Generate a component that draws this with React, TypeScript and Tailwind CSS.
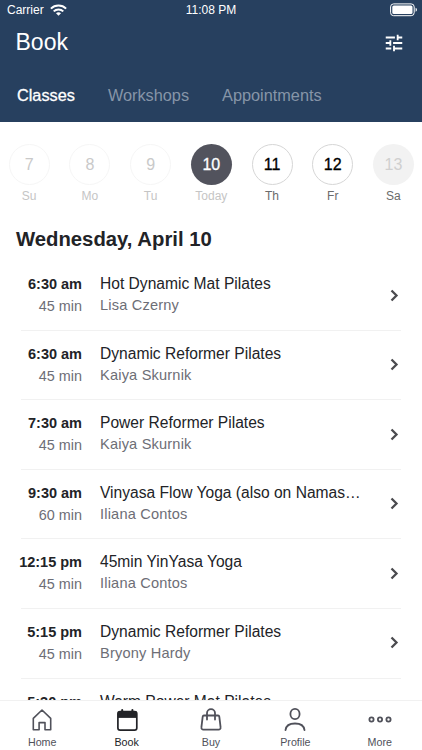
import React, { JSX } from 'react';
import clsx from 'clsx';

const days = [
  { date: 7, label: 'Su', state: 'past' },
  { date: 8, label: 'Mo', state: 'past' },
  { date: 9, label: 'Tu', state: 'past' },
  { date: 10, label: 'Today', state: 'selected' },
  { date: 11, label: 'Th', state: 'open' },
  { date: 12, label: 'Fr', state: 'open' },
  { date: 13, label: 'Sa', state: 'closed' },
];

const classes = [
  { id: 1, time: '6:30 am', duration: '45 min', name: 'Hot Dynamic Mat Pilates', teacher: 'Lisa Czerny' },
  { id: 2, time: '6:30 am', duration: '45 min', name: 'Dynamic Reformer Pilates', teacher: 'Kaiya Skurnik' },
  { id: 3, time: '7:30 am', duration: '45 min', name: 'Power Reformer Pilates', teacher: 'Kaiya Skurnik' },
  { id: 4, time: '9:30 am', duration: '60 min', name: 'Vinyasa Flow Yoga (also on Namas…', teacher: 'Iliana Contos' },
  { id: 5, time: '12:15 pm', duration: '45 min', name: '45min YinYasa Yoga', teacher: 'Iliana Contos' },
  { id: 6, time: '5:15 pm', duration: '45 min', name: 'Dynamic Reformer Pilates', teacher: 'Bryony Hardy' },
  { id: 7, time: '5:30 pm', duration: '', name: 'Warm Power Mat Pilates', teacher: '' },
];

const WifiIcon = (): JSX.Element => (
  <svg width="17" height="12" viewBox="0 0 17 12" fill="none" stroke="white" strokeWidth="2">
    <path d="M.9 4.6C5 .4 12 .4 16.1 4.6" />
    <path d="M3.7 7.4c2.7-2.6 6.9-2.6 9.6 0" />
    <path d="M8.5 11.8 6 9.3c1.4-1.3 3.6-1.3 5 0z" fill="white" stroke="none" />
  </svg>
);

const BatteryIcon = (): JSX.Element => (
  <svg width="28" height="14" viewBox="0 0 28 14" fill="none">
    <rect x=".6" y=".9" width="23.6" height="11.8" rx="3" stroke="white" strokeWidth="1" />
    <rect x="2.3" y="2.6" width="20.2" height="8.4" rx="1.5" fill="white" />
    <path d="M25.6 4.8c1.8.6 1.8 3.4 0 4z" fill="white" />
  </svg>
);

const FilterIcon = (): JSX.Element => (
  <svg width="22" height="22" viewBox="0 0 24 24" fill="white">
    <path d="M3 17v2h6v-2H3zM3 5v2h10V5H3zm10 16v-2h8v-2h-8v-2h-2v6h2zM7 9v2H3v2h4v2h2V9H7zm14 4v-2H11v2h10zm-6-4h2V7h4V5h-4V3h-2v6z" />
  </svg>
);

const HomeIcon = (): JSX.Element => (
  <svg width="24" height="26" viewBox="0 0 24 26" fill="none" stroke="#50515a" strokeWidth="1.6" strokeLinejoin="round">
    <path d="M3.3 11.4 12 3l8.700 8.400v11.400h-5.700v-7.200H9.100v7.200H3.300z" />
  </svg>
);

const BookIcon = (): JSX.Element => (
  <svg width="24" height="26" viewBox="0 0 24 26" fill="none" stroke="#222327" strokeWidth="1.7">
    <rect x="2.9" y="4.6" width="18.900" height="18.600" rx="2.200" />
    <path d="M2.9 4.6h18.900v6.300H2.900z" fill="#222327" stroke="none" />
    <path d="M7.200 2.900v3M17.400 2.900v3" strokeWidth="2" strokeLinecap="round" />
  </svg>
);

const BuyIcon = (): JSX.Element => (
  <svg width="24" height="26" viewBox="0 0 24 26" fill="none" stroke="#50515a" strokeWidth="1.8" strokeLinecap="round" strokeLinejoin="round">
    <path d="M5 8.500h14a1.300 1.300 0 0 1 1.300 1.100l1.300 10.800a2 2 0 0 1-2 2.300H4.400a2 2 0 0 1-2-2.300L3.700 9.600A1.300 1.300 0 0 1 5 8.500z" />
    <path d="M8 12.500V6.100a4 4 0 0 1 8 0v6.400" />
  </svg>
);

const ProfileIcon = (): JSX.Element => (
  <svg width="24" height="26" viewBox="0 0 24 26" fill="none" stroke="#50515a" strokeWidth="1.8" strokeLinecap="round">
    <ellipse cx="12" cy="7" rx="4.600" ry="5.200" />
    <path d="M2.500 23.100c.5-4.200 4.200-6.600 9.500-6.600s9 2.400 9.500 6.600" />
  </svg>
);

const MoreIcon = (): JSX.Element => (
  <svg width="24" height="26" viewBox="0 0 24 26" fill="none" stroke="#50515a" strokeWidth="1.800">
    <circle cx="3.500" cy="12.500" r="2.100" />
    <circle cx="12" cy="12.500" r="2.100" />
    <circle cx="20.500" cy="12.500" r="2.100" />
  </svg>
);

const navItems = [
  { title: 'Home', icon: <HomeIcon /> },
  { title: 'Book', icon: <BookIcon />, active: true },
  { title: 'Buy', icon: <BuyIcon /> },
  { title: 'Profile', icon: <ProfileIcon /> },
  { title: 'More', icon: <MoreIcon /> },
];

const Header = (): JSX.Element => (
  <header className="h-[122px] shrink-0 bg-[#27405f] text-white">
    <div className="grid h-5 grid-cols-3 items-center text-[12px]">
      <div className="flex items-center gap-[6px] pl-[7px]">
        <span>Carrier</span>
        <WifiIcon />
      </div>
      <span className="text-center">11:08 PM</span>
      <div className="flex justify-end pr-[4px]"><BatteryIcon /></div>
    </div>
    <div className="flex h-[45px] items-center justify-between pl-[15.500px] pr-[17.500px]">
      <h1 className="text-[23px] leading-[45px]">Book</h1>
      <FilterIcon />
    </div>
    <nav className="flex h-[57px] gap-[33px] pl-[17px] pt-[18px] text-[16.300px] leading-[24px] text-[#8695a8]">
      <span className="text-white [-webkit-text-stroke:0.300px_white]">Classes</span>
      <span>Workshops</span>
      <span>Appointments</span>
    </nav>
  </header>
);

const DayPicker = (): JSX.Element => (
  <div className="-ml-[1.200px] grid w-[425px] shrink-0 grid-cols-7 pt-[22px]">
    {days.map((day) => (
      <div key={day.date} className="flex flex-col items-center">
        <div
          className={clsx(
            'flex h-[41px] w-[41px] items-center justify-center rounded-full text-[16px]',
            day.state === 'past' && 'border border-[#f6f6f6] text-[#c9c9c9]',
            day.state === 'selected' && 'bg-[#52535d] text-white [-webkit-text-stroke:0.300px_white]',
            day.state === 'open' && 'border border-[#d6d6d6] text-black [-webkit-text-stroke:0.300px_black]',
            day.state === 'closed' && 'bg-[#f2f2f2] text-[#cfcfcf]',
          )}
        >
          {day.date}
        </div>
        <span
          className={clsx(
            'mt-[3px] text-[12px] leading-[16px]',
            day.state === 'past' || day.state === 'selected' ? 'text-[#c5c5c5]' : 'text-[#6b6b6b]',
          )}
        >
          {day.label}
        </span>
      </div>
    ))}
  </div>
);

const ClassList = (): JSX.Element => (
  <ul className="mt-[9px]">
    {classes.map((item) => (
      <li key={item.id} className="ml-[21px] mr-[21px] flex h-[69.600px] border-b border-[#f1f1f1] pt-[12px]">
        <div className="-ml-[11px] w-[72px] shrink-0 text-right">
          <p className="text-[14.500px] leading-[22px] font-bold whitespace-nowrap text-[#222327]">{item.time}</p>
          <p className="text-[14.400px] leading-[22px] text-[#6d6e76]">{item.duration}</p>
        </div>
        <div className="ml-[18px] w-[280px] shrink-0 whitespace-nowrap">
          <p className="text-[15.600px] leading-[22px] text-[#222327]">{item.name}</p>
          <p className="text-[14.600px] leading-[21px] tracking-[0.180px] text-[#6d6e76]">{item.teacher}</p>
        </div>
        <svg className="mt-[5.500px] ml-[9.500px] shrink-0" width="10" height="34" viewBox="0 0 10 34" fill="none" stroke="#4b4b4f" strokeWidth="2.300">
          <path d="m1.500 11.500 5 5-5 5" />
        </svg>
      </li>
    ))}
  </ul>
);

const BottomNav = (): JSX.Element => (
  <nav className="grid h-[50.500px] shrink-0 grid-cols-5 border-t border-[#f1f1f1] bg-white">
    {navItems.map((item) => (
      <div key={item.title} className="flex flex-col items-center pt-[6.500px]">
        {item.icon}
        <span className={clsx('mt-[2px] text-[10.700px] leading-[14px]', item.active ? 'text-[#222327]' : 'text-[#50515a]')}>
          {item.title}
        </span>
      </div>
    ))}
  </nav>
);

const App = (): JSX.Element => {
  return (
    <div className="flex h-[750px] w-[422px] flex-col overflow-hidden bg-white font-['Liberation_Sans',Arial,sans-serif]">
      <Header />
      <main className="flex min-h-0 flex-1 flex-col overflow-hidden">
        <DayPicker />
        <h2 className="mt-[22px] pl-[16px] text-[20.300px] leading-[26px] font-bold text-[#222327]">Wednesday, April 10</h2>
        <ClassList />
      </main>
      <BottomNav />
    </div>
  );
};

export default App;
